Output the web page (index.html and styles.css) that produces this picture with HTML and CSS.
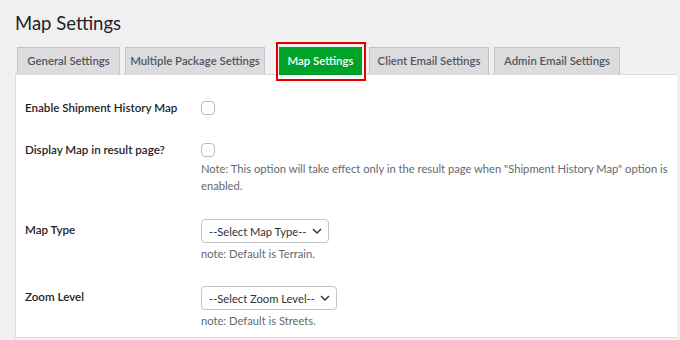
FILE: index.html
```html
<!DOCTYPE html>
<html>
<head>
<meta charset="utf-8">
<link rel="stylesheet" href="styles.css">
</head>
<body>
<div class="wrap">
  <h1 class="title">Map Settings</h1>
  <nav class="tabs">
    <a class="tab tab-general">General Settings</a>
    <a class="tab tab-multi">Multiple Package Settings</a>
    <a class="tab tab-active">Map Settings</a>
    <a class="tab tab-client">Client Email Settings</a>
    <a class="tab tab-admin">Admin Email Settings</a>
  </nav>
  <div class="panel">
    <div class="row row-first">
      <div class="label">Enable Shipment History Map</div>
      <div class="field"><span class="check"></span></div>
    </div>
    <div class="row">
      <div class="label">Display Map in result page?</div>
      <div class="field">
        <span class="check"></span>
        <p class="note">Note: This option will take effect only in the result page when "Shipment History Map" option is enabled.</p>
      </div>
    </div>
    <div class="row row-sel">
      <div class="label label-sel">Map Type</div>
      <div class="field">
        <div class="select">--Select Map Type--<svg class="chev" width="10" height="6" viewBox="0 0 10 6"><path d="M1 1l4 4 4-4" fill="none" stroke="#2c3338" stroke-width="1.4"/></svg></div>
        <p class="note note-sel">note: Default is Terrain.</p>
      </div>
    </div>
    <div class="row">
      <div class="label label-sel">Zoom Level</div>
      <div class="field">
        <div class="select">--Select Zoom Level--<svg class="chev" width="10" height="6" viewBox="0 0 10 6"><path d="M1 1l4 4 4-4" fill="none" stroke="#2c3338" stroke-width="1.4"/></svg></div>
        <p class="note note-sel">note: Default is Streets.</p>
      </div>
    </div>
  </div>
</div>
</body>
</html>
```
FILE: styles.css
```css
html, body {
  margin: 0;
  padding: 0;
  background: #f0f0f1;
  font-family: Lato, "Open Sans", sans-serif;
  color: #1d2327;
}
.wrap {
  padding: 0 3px 0 15px;
}
.title {
  margin: 0;
  padding: 10px 0 0 0;
  height: 37px;
  font-size: 18.5px;
  font-weight: 400;
  line-height: 26px;
  color: #1d2327;
}
.tabs {
  display: flex;
  align-items: flex-end;
  padding-left: 2px;
  height: 27px;
}
.tab {
  position: relative;
  display: block;
  box-sizing: border-box;
  height: 27px;
  padding: 0;
  margin-right: 5px;
  background: #dcdcde;
  border: 1px solid #c3c4c7;
  border-bottom: none;
  font-size: 11.4px;
  font-weight: 600;
  line-height: 26px;
  text-align: center;
  color: #50575e;
  white-space: nowrap;
}
.tab-general { width: 103px; }
.tab-multi { width: 140px; }
.tab-client { width: 120px; margin-left: 7px; }
.tab-admin { width: 126px; }
.tab-active {
  width: 83px;
  margin-left: 9px;
  margin-right: 0;
  height: 28px;
  margin-bottom: -1px;
  background: #00a32a;
  border-color: #00a32a;
  color: #fff;
}
.tab-active::after {
  content: "";
  position: absolute;
  left: -4px;
  right: -5px;
  top: -6px;
  bottom: -6px;
  border: 2px solid #e00000;
}
.panel {
  background: #fff;
  border: 1px solid #dcdcde;
  border-right: none;
  height: 264px;
  box-sizing: border-box;
  padding: 11px 0 0 9px;
}
.row {
  display: grid;
  grid-template-columns: 176px 1fr;
  padding: 12px 0;
}
.row-first {
  padding-bottom: 10px;
}
.row-sel {
  padding-top: 13px;
}
.label {
  font-size: 11.6px;
  font-weight: 600;
  line-height: 20px;
  color: #1d2327;
}
.label-sel {
  line-height: 22px;
}
.field {
  font-size: 11.6px;
}
.check {
  display: block;
  box-sizing: border-box;
  width: 14px;
  height: 14px;
  margin: 3px 0;
  border: 1px solid #8c8f94;
  border-radius: 4px;
  background: #fff;
  opacity: 0.6;
}
.note {
  margin: 0;
  font-size: 11.2px;
  line-height: 17px;
  color: #646970;
}
.note-sel {
  margin-top: 2px;
}
.select {
  display: inline-flex;
  align-items: center;
  box-sizing: border-box;
  height: 24px;
  padding: 0 6px 0 7px;
  border: 1px solid #c3c4c7;
  border-radius: 4px;
  font-size: 11.2px;
  color: #2c3338;
  gap: 5px;
}
.chev {
  display: block;
}
```
